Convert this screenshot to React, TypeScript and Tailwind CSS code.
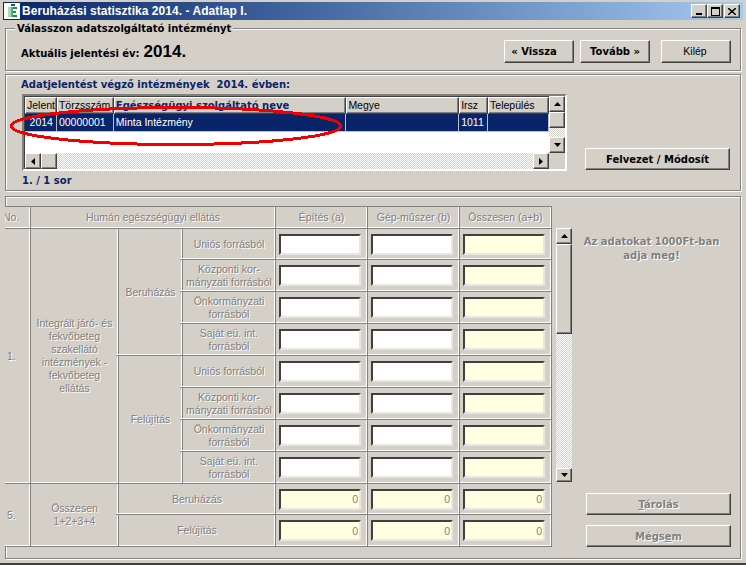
const raised =
  "border border-t-white border-l-white border-r-[#404040] border-b-[#404040] shadow-[inset_-1px_-1px_0_#808080] bg-[#d4d0c8]";
const etched = "border border-[#808080] shadow-[1px_1px_0_#fff,inset_1px_1px_0_#fff]";
const disabled = "text-[#808080] [text-shadow:1px_1px_0_#fff]";
const tahomaBold = "font-['DejaVu_Sans',sans-serif] font-bold text-[10px]";
const dither = "bg-[repeating-conic-gradient(#d4d0c8_0_25%,#fff_0_50%)] bg-[length:2px_2px]";
const cell =
  "flex items-center justify-center text-center border-r border-b border-r-[#808080] border-b-[#808080] shadow-[inset_-1px_-1px_0_#fff] overflow-hidden";
// sorvonal kis kilogasa a bal oldali oszlopba
const tick =
  "relative !overflow-visible after:absolute after:-left-[3px] after:-bottom-[1px] after:w-[3px] after:h-[1px] after:bg-[#808080] after:shadow-[0_-1px_0_#fff]";

function Arrow({ dir }: { dir: "up" | "down" | "left" | "right" }) {
  const points = {
    up: "0,4 7,4 3.5,0",
    down: "0,0 7,0 3.5,4",
    left: "4,0 4,7 0,3.5",
    right: "0,0 0,7 4,3.5",
  }[dir];
  const vertical = dir === "up" || dir === "down";
  return (
    <svg width={vertical ? 7 : 4} height={vertical ? 4 : 7}>
      <polygon points={points} fill="#000" />
    </svg>
  );
}

function ScrollBtn({ dir, className = "" }: { dir: "up" | "down" | "left" | "right"; className?: string }) {
  return <div className={`${raised} flex items-center justify-center shrink-0 ${className}`}><Arrow dir={dir} /></div>;
}

function Logo() {
  return (
    <svg width="16" height="16" className="shrink-0">
      <rect width="16" height="16" fill="#fff" />
      <rect x="7" y="1" width="4" height="2" fill="#0b6b3a" />
      <rect x="4" y="4" width="3" height="10" fill="#a9d8bb" />
      <rect x="7" y="4" width="2" height="10" fill="#4cae75" />
      <rect x="9" y="4" width="4" height="2" fill="#1d8a50" />
      <rect x="9" y="8" width="3" height="2" fill="#1d8a50" />
      <rect x="9" y="12" width="4" height="2" fill="#1d8a50" />
    </svg>
  );
}

function TitleButton({ children, className = "" }: { children: React.ReactNode; className?: string }) {
  return <div className={`${raised} w-[16px] h-[14px] flex items-center justify-center ${className}`}>{children}</div>;
}

function Cell({ children, className = "" }: { children?: React.ReactNode; className?: string }) {
  return <div className={`${cell} ${disabled} ${className}`}>{children}</div>;
}

function Field({ sum, value }: { sum?: boolean; value?: string }) {
  return (
    <div className={cell}>
      <input
        readOnly
        value={value ?? ""}
        className={`w-[82px] h-[21px] mr-[3px] border-2 border-t-[#404040] border-l-[#404040] border-r-[#e8e6e0] border-b-[#e8e6e0] px-[1px] text-right text-[10.5px] text-[#808080] ${sum ? "bg-[#ffffe1]" : "bg-white"}`}
      />
    </div>
  );
}

function Row({ label, sum, value, className = "" }: { label: React.ReactNode; sum?: boolean; value?: string; className?: string }) {
  return (
    <>
      <Cell className={className}>
        <div>{label}</div>
      </Cell>
      <Field value={value} sum={sum} />
      <Field value={value} sum={sum} />
      <Field value={value} sum />
    </>
  );
}

const sources = [
  "Uniós forrásból",
  <>Központi kor-<br />mányzati forrásból</>,
  <>Önkormányzati<br />forrásból</>,
  <>Saját eü. int.<br />forrásból</>,
];

const columns = [
  { name: "Jelent", w: "w-[32px]", value: "2014", cls: "justify-end pr-[3px]" },
  { name: "Törzsszám", w: "w-[57px]", value: "00000001", cls: "pl-[2px]" },
  { name: "Egészségügyi szolgáltató neve", w: "w-[233px]", value: "Minta Intézmény", cls: "pl-[2px]" },
  { name: "Megye", w: "w-[113px]", value: "", cls: "" },
  { name: "Irsz", w: "w-[29px]", value: "1011", cls: "pl-[2px]" },
  { name: "Település", w: "w-[61px]", value: "", cls: "" },
];

export default function App() {
  return (
    <div className="relative w-[746px] h-[565px] overflow-hidden bg-[#d4d0c8] pt-[2px] px-[3px] font-['Liberation_Sans',sans-serif] text-[10.5px] text-black border-b-2 border-b-[#404040]">
      {/* title bar */}
      <div className="h-[18px] flex items-center pl-[1px] pr-[3px] bg-gradient-to-r from-[#0a246a] to-[#a6caf0]">
        <Logo />
        <span className="ml-[2px] text-white font-bold text-[12px] tracking-[0.05px]">Beruházási statisztika 2014. - Adatlap I.</span>
        <div className="ml-auto flex">
          <TitleButton>
            <div className="w-[6px] h-[2px] bg-black mt-[6px] -ml-[1px]" />
          </TitleButton>
          <TitleButton>
            <div className="w-[9px] h-[9px] border border-black border-t-2" />
          </TitleButton>
          <TitleButton className="ml-[1px]">
            <svg width="8" height="7">
              <path d="M0 0 L8 7 M8 0 L0 7" stroke="#000" strokeWidth="1.5" />
            </svg>
          </TitleButton>
        </div>
      </div>

      {/* valasztas */}
      <div className={`relative mx-[2px] mt-[8px] h-[43px] flex items-start justify-between pt-[11px] pl-[15px] pr-[9px] ${etched}`}>
        <span className={`absolute -top-[8px] left-[9px] px-[2px] bg-[#d4d0c8] ${tahomaBold}`}>Válasszon adatszolgáltató intézményt</span>
        <div className="flex items-baseline gap-[4px] -mt-[1px]">
          <span className={tahomaBold}>Aktuális jelentési év:</span>
          <span className="font-bold text-[17px]">2014.</span>
        </div>
        <div className="flex">
          <button className={`${raised} ${tahomaBold} w-[70px] h-[23px] pr-[10px]`}>« Vissza</button>
          <button className={`${raised} ${tahomaBold} w-[70px] h-[23px] ml-[6px]`}>Tovább »</button>
          <button className={`${raised} w-[70px] h-[23px] ml-[11px] pr-[2px]`}>Kilép</button>
        </div>
      </div>

      {/* intezmenyek */}
      <div className={`mx-[2px] mt-[3px] h-[117px] flex pl-[16px] ${etched}`}>
        <div className="w-[545px] pt-[3px]">
          <div className={`${tahomaBold} -ml-[1px] leading-[14px] text-[#0a246a]`}>Adatjelentést végző intézmények&nbsp; 2014. évben:</div>
          <div className="mt-[2px] h-[77px] flex border-2 border-t-[#808080] border-l-[#808080] border-r-white border-b-white bg-[#d4d0c8]">
            <div className="w-[525px] flex flex-col border-t border-l border-[#404040]">
              <div className="flex h-[17px]">
                {columns.map((c, i) => (
                  <div
                    key={c.name}
                    className={`${c.w} ${raised} pl-[1px] flex items-center overflow-hidden whitespace-nowrap ${i === 2 ? `${tahomaBold} text-[#0a246a]` : ""}`}
                  >
                    {c.name}
                  </div>
                ))}
              </div>
              <div className="flex h-[18px] bg-[#0a246a] text-white border-b border-[#c0c0c0]">
                {columns.map((c) => (
                  <div key={c.name} className={`${c.w} ${c.cls} pt-[1px] flex items-center border-r border-[#c0c0c0]`}>
                    {c.value}
                  </div>
                ))}
              </div>
              <div className="flex-1 bg-white" />
              <div className={`h-[16px] flex ${dither}`}>
                <ScrollBtn dir="left" className="w-[16px]" />
                <div className={`${raised} w-[16px]`} />
                <ScrollBtn dir="right" className="w-[16px] ml-auto" />
              </div>
            </div>
            <div className="w-[16px] flex flex-col h-[57px]">
              <ScrollBtn dir="up" className="h-[16px]" />
              <div className={`${raised} h-[16px]`} />
              <div className={`flex-1 ${dither}`} />
              <ScrollBtn dir="down" className="h-[16px]" />
            </div>
          </div>
          <div className={`${tahomaBold} leading-[14px] mt-[3px] text-[#0a246a]`}>1. / 1 sor</div>
        </div>
        <button className={`${raised} ${tahomaBold} w-[145px] h-[22px] ml-[18px] mt-[73px]`}>Felvezet / Módosít</button>
      </div>

      {/* adatok */}
      <div className={`mx-[2px] mt-[5px] h-[363px] flex pt-[9px] ${etched}`}>
        <div className="-ml-[1px] h-[341px] w-[547px] shrink-0 bg-[#d4d0c8] border-t border-t-[#808080] grid grid-cols-[26px_88px_64px_93px_92px_92px_92px] grid-rows-[22px_31px_repeat(7,32px)_31px_32px] leading-[13px]">
          <Cell className="!justify-start"><span className="-ml-[2px]">No.</span></Cell>
          <Cell className="col-span-3">Humán egészségügyi ellátás</Cell>
          <Cell>Építés (a)</Cell>
          <Cell>Gép-műszer (b)</Cell>
          <Cell>Összesen (a+b)</Cell>

          <Cell className="row-span-8 !justify-start pl-[2px]">1.</Cell>
          <Cell className="row-span-8">
            <div>Integrált járó- és<br />fekvőbeteg<br />szakellátó<br />intézmények -<br />fekvőbeteg<br />ellátás</div>
          </Cell>
          <Cell className={`row-span-4 ${tick}`}>Beruházás</Cell>
          {sources.map((s, i) => <Row key={i} label={s} className={i < 3 ? tick : ""} />)}
          <Cell className="row-span-4">Felújítás</Cell>
          {sources.map((s, i) => <Row key={i} label={s} className={i < 3 ? tick : ""} />)}

          <Cell className="row-span-2 !justify-start pl-[2px]">5.</Cell>
          <Cell className="row-span-2">
            <div>Összesen<br />1+2+3+4</div>
          </Cell>
          <Row label="Beruházás" className={`col-span-2 ${tick}`} value="0" sum />
          <Row label="Felújítás" className="col-span-2" value="0" sum />
        </div>

        <div className="w-[16px] ml-[4px] mt-[22px] h-[254px] flex flex-col shrink-0">
          <ScrollBtn dir="up" className="h-[16px]" />
          <div className={`${raised} h-[90px]`} />
          <div className={`flex-1 ${dither}`} />
          <ScrollBtn dir="down" className="h-[14px]" />
        </div>

        <div className="w-[145px] ml-[14px] flex flex-col pb-[11px]">
          <div className={`${tahomaBold} ${disabled} pt-[29px] leading-[14px] text-center -ml-[14px]`}>
            Az adatokat 1000Ft-ban<br />adja meg!
          </div>
          <button className={`${raised} ${tahomaBold} ${disabled} h-[22px] mt-auto`}>
            <span className="underline">T</span>árolás
          </button>
          <button className={`${raised} ${tahomaBold} ${disabled} h-[22px] mt-[10px]`}>
            Mégs<span className="underline">e</span>m
          </button>
        </div>
      </div>

      {/* kezzel rajzolt kiemeles */}
      <svg className="absolute top-0 left-0 pointer-events-none" width="746" height="565">
        <ellipse cx="176" cy="126" rx="165" ry="18.5" fill="none" stroke="#f00000" strokeWidth="3" shapeRendering="crispEdges" />
      </svg>
    </div>
  );
}
